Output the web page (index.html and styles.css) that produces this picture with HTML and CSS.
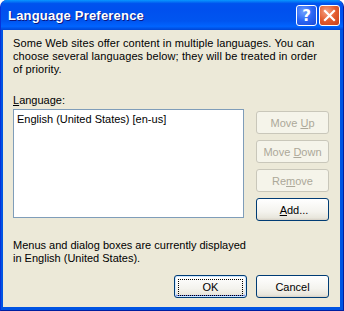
FILE: index.html
```html
<!DOCTYPE html>
<html lang="en">
<head>
  <meta charset="UTF-8">
  <title>Language Preference</title>
  <link rel="stylesheet" href="styles.css">
</head>
<body>

<div class="window">
  <div class="titlebar">
    <span class="title">Language Preference</span>
    <div class="title-buttons">
      <span class="tb-btn help">?</span>
      <span class="tb-btn close">
        <svg width="13" height="13" viewBox="0 0 13 13">
          <path d="M2 2 L11 11 M11 2 L2 11" stroke="#fff" stroke-width="2.2" stroke-linecap="square"/>
        </svg>
      </span>
    </div>
  </div>

  <div class="client">
    <p class="intro">Some Web sites offer content in multiple languages. You can choose several languages below; they will be treated in order of priority.</p>

    <div class="label"><u>L</u>anguage:</div>
    <div class="list-row">
      <div class="listbox">
        <div class="item">English (United States) [en-us]</div>
      </div>
      <div class="side-buttons">
        <button class="btn" disabled>Move <u>U</u>p</button>
        <button class="btn" disabled>Move <u>D</u>own</button>
        <button class="btn" disabled>Re<u>m</u>ove</button>
        <button class="btn">&nbsp;<u>A</u>dd...</button>
      </div>
    </div>

    <p class="note">Menus and dialog boxes are currently displayed<br>in English (United States).</p>

    <div class="footer">
      <button class="btn default"><span class="focus">OK</span></button>
      <button class="btn">Cancel</button>
    </div>
  </div>
</div>

</body>
</html>
```

FILE: styles.css
```css
body {
  margin: 0;
  padding: 0;
  background: #fff;
  font-family: 'Liberation Sans', Arial, sans-serif;
  font-size: 11px;
}
.window {
  width: 344px;
  height: 311px;
  box-sizing: border-box;
  display: flex;
  flex-direction: column;
  background: #0054e3;
  border-radius: 7px 7px 0 0;
  border-left: 1px solid #0831d9;
  border-right: 1px solid #001ea0;
  border-bottom: 1px solid #001ea0;
  overflow: hidden;
}
.titlebar {
  height: 30px;
  flex: none;
  display: flex;
  align-items: center;
  justify-content: space-between;
  padding: 0 3px 0 7px;
  background: linear-gradient(to bottom, #0997ff 0%, #0053ee 12%, #0050ee 30%, #0055f0 70%, #0064ff 88%, #0046d5 100%);
}
.title {
  color: #fff;
  font-family: 'Liberation Sans', Arial, sans-serif;
  font-weight: bold;
  font-size: 13px;
  letter-spacing: 0.2px;
  text-shadow: 1px 1px 0 #0a1883;
}
.title-buttons {
  display: flex;
  gap: 2px;
  margin-top: 1px;
}
.tb-btn {
  width: 19px;
  height: 19px;
  border: 1px solid #fff;
  border-radius: 3px;
  display: flex;
  align-items: center;
  justify-content: center;
  color: #fff;
}
.help {
  background: radial-gradient(circle at 35% 30%, #6fa0ff 0%, #2a66f5 50%, #1a49d6 100%);
  font-family: 'DejaVu Sans', sans-serif;
  font-weight: bold;
  font-size: 15px;
}
.close {
  background: radial-gradient(circle at 35% 30%, #f7a283 0%, #e35c2e 50%, #c8401a 100%);
}
.client {
  flex: 1;
  margin: 0 3px 3px 2px;
  background: #ece9d8;
  padding: 7px 11px 0 10px;
  color: #000;
}
.intro {
  margin: 0;
  line-height: 13px;
  letter-spacing: 0.1px;
}
.label {
  margin-top: 18px;
  line-height: 13px;
}
.list-row {
  display: flex;
  gap: 12px;
  margin-top: 2px;
}
.listbox {
  width: 229px;
  height: 107px;
  background: #fff;
  border: 1px solid #7f9db9;
}
.item {
  padding: 3px 0 0 3px;
  line-height: 13px;
}
.side-buttons {
  display: flex;
  flex-direction: column;
  gap: 6px;
  padding-top: 2px;
}
.btn {
  width: 73px;
  height: 23px;
  box-sizing: border-box;
  font-family: 'Liberation Sans', Arial, sans-serif;
  font-size: 11px;
  color: #000;
  border: 1px solid #003c74;
  border-radius: 3px;
  background: linear-gradient(to bottom, #fff 0%, #f4f3ee 60%, #e8e6dc 90%, #d6d0c5 100%);
  padding: 0;
}
.btn:disabled {
  color: #aca899;
  border-color: #c9c7ba;
  background: #f5f4ea;
}
.note {
  margin: 18px 0 0 0;
  line-height: 13px;
}
.footer {
  display: flex;
  justify-content: flex-end;
  gap: 9px;
  margin-top: 10px;
}
.default {
  box-shadow: inset 0 0 0 1px #cee7ff, inset 0 -1px 0 1px #6982ee;
}
.focus {
  display: block;
  margin: 3px;
  height: 15px;
  line-height: 15px;
  border: 1px dotted #000;
}
```
